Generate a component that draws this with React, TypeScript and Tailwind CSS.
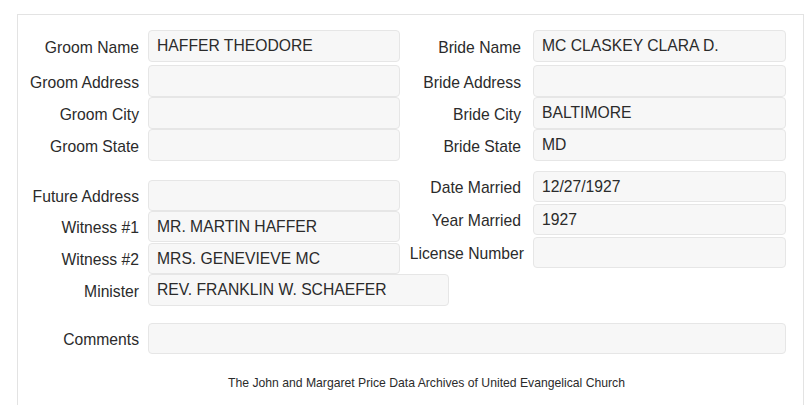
type FieldProps = {
  label: string
  value?: string
  labelW: string
  gap: string
  inputW: string
  h: string
  extra?: string
  labelExtra?: string
}

function Field({ label, value, labelW, gap, inputW, h, extra = '', labelExtra = '' }: FieldProps) {
  return (
    <div className={`flex items-center ${h} ${extra}`}>
      <div
        className={`${labelW} ${labelExtra} shrink-0 flex justify-end pt-[3px] whitespace-nowrap text-[15.7px] text-[#2b2b2b]`}
      >
        {label}
      </div>
      <div
        className={`${gap} ${inputW} shrink-0 h-full flex items-center px-[8px] border border-[#e6e6e6] bg-[#f7f7f7] rounded-[4px] text-[15.7px] text-[#2b2b2b] whitespace-nowrap overflow-hidden`}
      >
        {value}
      </div>
    </div>
  )
}

export default function App() {
  return (
    <div className="h-[405px] w-[805px] overflow-hidden bg-white pt-[14px] pl-[17px] font-[Liberation_Sans,Arial,sans-serif]">
      <div className="w-[787px] h-[400px] border border-[#e3e3e3]">
        {/* groom / bride */}
        <div className="flex pt-[15px]">
          <div className="w-[383px] shrink-0 flex flex-col">
            <Field label="Groom Name" value="HAFFER THEODORE" labelW="w-[121px]" gap="ml-[9px]" inputW="w-[252px]" h="h-[32px]" extra="mb-[3px]" />
            <Field label="Groom Address" labelW="w-[121px]" gap="ml-[9px]" inputW="w-[252px]" h="h-[32px]" />
            <Field label="Groom City" labelW="w-[121px]" gap="ml-[9px]" inputW="w-[252px]" h="h-[32px]" />
            <Field label="Groom State" labelW="w-[121px]" gap="ml-[9px]" inputW="w-[252px]" h="h-[32px]" />
          </div>
          <div className="flex flex-col">
            <Field label="Bride Name" value="MC CLASKEY CLARA D." labelW="w-[120px]" gap="ml-[12px]" inputW="w-[253px]" h="h-[32px]" extra="mb-[3px]" />
            <Field label="Bride Address" labelW="w-[120px]" gap="ml-[12px]" inputW="w-[253px]" h="h-[32px]" />
            <Field label="Bride City" value="BALTIMORE" labelW="w-[120px]" gap="ml-[12px]" inputW="w-[253px]" h="h-[32px]" />
            <Field label="Bride State" value="MD" labelW="w-[120px]" gap="ml-[12px]" inputW="w-[253px]" h="h-[32px]" />
          </div>
        </div>

        {/* marriage details */}
        <div className="flex items-start">
          <div className="w-[383px] shrink-0 flex flex-col mt-[19px]">
            <Field label="Future Address" labelW="w-[121px]" gap="ml-[9px]" inputW="w-[252px]" h="h-[31px]" />
            <Field label="Witness #1" value="MR. MARTIN HAFFER" labelW="w-[121px]" gap="ml-[9px]" inputW="w-[252px]" h="h-[31px]" />
            <Field label="Witness #2" value="MRS. GENEVIEVE MC" labelW="w-[121px]" gap="ml-[9px]" inputW="w-[252px]" h="h-[31px]" extra="mt-[1px]" />
            <Field label="Minister" value="REV. FRANKLIN W. SCHAEFER" labelW="w-[121px]" gap="ml-[9px]" inputW="w-[301px]" h="h-[32px]" />
          </div>
          <div className="flex flex-col mt-[10px]">
            <Field label="Date Married" value="12/27/1927" labelW="w-[120px]" gap="ml-[12px]" inputW="w-[253px]" h="h-[31px]" />
            <Field label="Year Married" value="1927" labelW="w-[120px]" gap="ml-[12px]" inputW="w-[253px]" h="h-[31px]" extra="mt-[2px]" />
            <Field label="License Number" labelW="w-[123px]" labelExtra="mr-[-3px]" gap="ml-[12px]" inputW="w-[253px]" h="h-[31px]" extra="mt-[2px]" />
          </div>
        </div>

        {/* comments */}
        <div className="mt-[17px]">
          <Field label="Comments" labelW="w-[121px]" gap="ml-[9px]" inputW="w-[638px]" h="h-[31px]" />
        </div>

        <div className="mt-[21px] pl-[32px] text-center text-[12.2px] leading-[16px] text-[#2b2b2b]">
          The John and Margaret Price Data Archives of United Evangelical Church
        </div>
      </div>
    </div>
  )
}
